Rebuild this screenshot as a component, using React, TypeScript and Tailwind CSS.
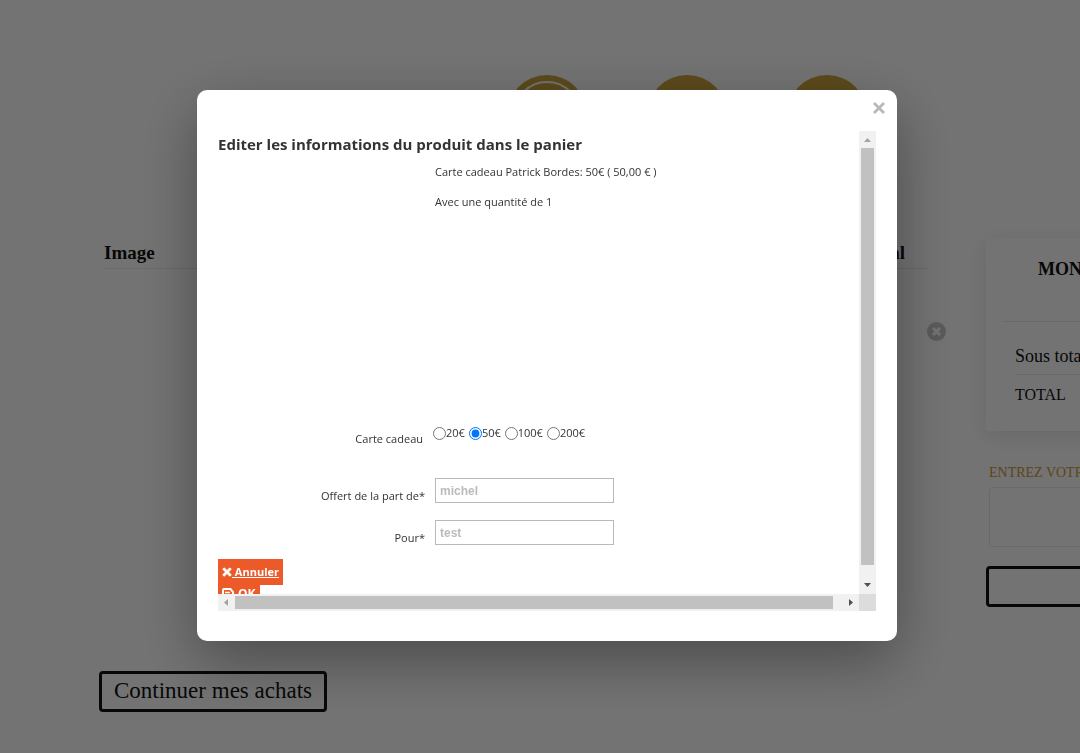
import { useState } from 'react';
import { FaTimes } from 'react-icons/fa';

const AMOUNTS = ['20€', '50€', '100€', '200€'];

const FIELDS = [
  { id: 'from', label: 'Offert de la part de*', placeholder: 'michel' },
  { id: 'to', label: 'Pour*', placeholder: 'test' },
];

const StepIcon = ({ active = false }: { active?: boolean }) => (
  <svg viewBox="0 0 80 80" className="size-20" aria-hidden="true">
    <circle cx="40" cy="40" r="40" fill="#cca43c" />
    {active && <circle cx="40" cy="40" r="33" fill="none" stroke="#fff" strokeWidth="2" />}
  </svg>
);

const SaveIcon = () => (
  <svg viewBox="0 0 12 12" className="size-3" fill="none" stroke="currentColor" aria-hidden="true">
    <path d="M1 2V10a1 1 0 0 0 1 1H10a1 1 0 0 0 1-1V4L8.500 1H2a1 1 0 0 0-1 1z" strokeWidth="2" />
    <path d="M3 4.500H8M3.500 11V8H8.500V11" strokeWidth="1.500" />
  </svg>
);

const Arrow = ({ points, color }: { points: string; color: string }) => (
  <svg viewBox="0 0 17 17" className="size-[17px] shrink-0" aria-hidden="true">
    <polygon points={points} fill={color} />
  </svg>
);

const CartPage = () => (
  <div className="pt-[75px] font-['Liberation_Serif',serif] text-[#111]">
    <header className="ml-[294px] flex justify-center gap-[60px]">
      <StepIcon active />
      <StepIcon />
      <StepIcon />
    </header>

    <main className="-mr-[126px] mt-[83px] flex gap-10 pl-[99px]">
      <section className="flex-1">
        <div className="pl-[5px]">
          <table className="w-full border-collapse text-[19px]">
            <thead>
              <tr className="h-[30px] leading-[30px]">
                <th className="border-b border-[#e8e8e8] p-0 text-left font-bold">Image</th>
                <th className="border-b border-[#e8e8e8] p-0 pr-[22px] text-right font-bold">Total</th>
                <td className="w-[19px] p-0" />
              </tr>
            </thead>
            <tbody>
              <tr className="h-[125px]">
                <td />
                <td />
                <td className="p-0">
                  <button aria-label="Supprimer" className="block">
                    <svg viewBox="0 0 19 19" className="size-[19px]">
                      <circle cx="9.5" cy="9.5" r="9.5" fill="#c8c8c8" />
                      <path d="M6 6l7 7M13 6l-7 7" stroke="#fff" strokeWidth="3" />
                    </svg>
                  </button>
                </td>
              </tr>
            </tbody>
          </table>
        </div>
        <button className="mt-[277px] h-[41px] rounded border-[3px] border-[#111] px-3 text-[23px] leading-[34px]">
          Continuer mes achats
        </button>
      </section>

      <aside className="w-[220px] shrink-0">
        <div className="h-[193px] px-4 shadow-[0_5px_20px_rgba(0,0,0,0.1)]">
          <h2 className="h-[84px] border-b border-[#e8e8e8] pt-4 text-center text-lg font-bold leading-[30px]">
            MON PANIER
          </h2>
          <div className="pl-[13px]">
            <div className="border-b border-[#e8e8e8] pb-1 pt-5 text-lg leading-7">Sous total</div>
            <div className="pt-1 text-base leading-8">TOTAL</div>
          </div>
        </div>
        <div className="mt-8 pl-[3px]">
          <label htmlFor="promo" className="block text-sm leading-5 text-[#cc9a3c]">
            ENTREZ VOTRE CODE
          </label>
          <input id="promo" className="mt-1 h-[60px] w-full rounded border border-[#e8e8e8]" />
        </div>
        <button aria-label="Valider" className="mt-[19px] h-[41px] w-full rounded border-[3px] border-[#111]" />
      </aside>
    </main>
  </div>
);

const EditForm = () => {
  const [amount, setAmount] = useState('50€');

  return (
    <form className="h-[463px] min-w-0 flex-1 overflow-hidden text-[11px]" onSubmit={(e) => e.preventDefault()}>
      <h1 className="whitespace-nowrap text-[15px] font-bold leading-[26px]">
        Editer les informations du produit dans le panier
      </h1>
      <div className="pl-[217px] leading-[30px]">
        <p>Carte cadeau Patrick Bordes: 50€ ( 50,00 € )</p>
        <p>Avec une quantité de 1</p>
      </div>

      <fieldset className="mt-[200px] flex h-8" aria-labelledby="amount-label">
        <span id="amount-label" className="w-[205px] pt-3 text-right leading-5">
          Carte cadeau
        </span>
        <div className="ml-[10px] flex h-8 items-center gap-1">
          {AMOUNTS.map((value) => (
            <label key={value} className="flex items-center leading-5">
              <input
                type="radio"
                name="amount"
                className="m-0 size-[13px]"
                checked={amount === value}
                onChange={() => setAmount(value)}
              />
              {value}
            </label>
          ))}
        </div>
      </fieldset>

      <div className="mt-[29px] flex flex-col gap-[17px]">
        {FIELDS.map((field) => (
          <div key={field.id} className="flex h-[25px]">
            <label htmlFor={field.id} className="w-[207px] pt-2 text-right leading-5">
              {field.label}
            </label>
            <input
              id={field.id}
              placeholder={field.placeholder}
              className="ml-[10px] h-[25px] w-[179px] border border-[#b9b9b9] px-1 font-['Liberation_Sans',sans-serif] text-xs font-bold placeholder:text-[#bbb]"
            />
          </div>
        ))}
      </div>

      <div className="mt-[14px] flex flex-col items-start font-bold text-white">
        <button type="button" className="flex h-[26px] items-center bg-[#eb5a28] px-1 underline">
          <FaTimes className="h-3 w-[10px]" stroke="currentColor" strokeWidth="30" aria-hidden="true" />
          <span className="whitespace-pre"> Annuler</span>
        </button>
        <button type="submit" className="flex h-[26px] items-center gap-1 bg-[#eb5a28] px-1 pb-2 text-xs">
          <SaveIcon />
          <span>OK</span>
        </button>
      </div>
    </form>
  );
};

const App = () => (
  <div className="relative min-h-screen overflow-hidden bg-white">
    <CartPage />

    <div className="fixed inset-0 flex items-start justify-center bg-black/55 pl-[14px] pt-[90px]">
      <div
        role="dialog"
        aria-modal="true"
        className="relative w-full max-w-[700px] rounded-[10px] bg-white px-[21px] pb-[30px] pt-[41px] font-['Open_Sans',sans-serif] text-[#333] shadow-[0_20px_60px_rgba(0,0,0,0.35)]"
      >
        <button aria-label="Fermer" className="absolute right-3 top-3">
          <svg viewBox="0 0 12 12" className="size-3">
            <path d="M1 1l10 10M11 1L1 11" stroke="#b8b8b8" strokeWidth="2.8" />
          </svg>
        </button>

        <div className="flex">
          <EditForm />
          <div className="flex w-[17px] flex-col bg-[#f1f1f1]">
            <Arrow points="5,11 8.5,7 12,11" color="#a3a3a3" />
            <div className="mx-[2px] flex-1 bg-[#c1c1c1]" />
            <div className="h-3" />
            <Arrow points="5,6 12,6 8.5,10" color="#505050" />
          </div>
        </div>
        <div className="flex bg-[#f1f1f1]">
          <Arrow points="10,5 10,12 6,8.5" color="#a3a3a3" />
          <div className="my-[2px] flex-1 bg-[#c1c1c1]" />
          <div className="w-[9px]" />
          <Arrow points="7,5 7,12 11,8.5" color="#505050" />
          <div className="size-[17px] bg-[#dcdcdc]" />
        </div>
      </div>
    </div>
  </div>
);

export default App;
